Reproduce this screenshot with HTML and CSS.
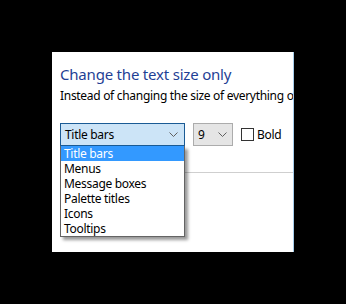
FILE: index.html
```html
<!DOCTYPE html>
<html>
<head>
<meta charset="utf-8">
<link rel="stylesheet" href="styles.css">
</head>
<body>
<div class="panel">
  <h1 class="title">Change the text size only</h1>
  <p class="desc">Instead of changing the size of everything on this screen, change only the text size.</p>
  <div class="row">
    <div class="combo-wrap">
      <div class="combo focused">
        <span class="combo-text">Title bars</span>
        <svg class="chev" width="9" height="5" viewBox="0 0 9 5"><path d="M0.5 0.5 L4.5 4.5 L8.5 0.5" fill="none" stroke="#606060" stroke-width="1"/></svg>
      </div>
      <ul class="list">
        <li class="sel">Title bars</li>
        <li>Menus</li>
        <li>Message boxes</li>
        <li>Palette titles</li>
        <li>Icons</li>
        <li>Tooltips</li>
      </ul>
    </div>
    <div class="combo size">
      <span class="combo-text">9</span>
      <svg class="chev" width="9" height="5" viewBox="0 0 9 5"><path d="M0.5 0.5 L4.5 4.5 L8.5 0.5" fill="none" stroke="#606060" stroke-width="1"/></svg>
    </div>
    <label class="check"><span class="box"></span><span>Bold</span></label>
  </div>
  <div class="sep"></div>
</div>
</body>
</html>
```
FILE: styles.css
```css
html, body {
  margin: 0;
  padding: 0;
  background: #000;
}
body {
  width: 346px;
  height: 304px;
  overflow: hidden;
  font-family: "Noto Sans", "Open Sans", sans-serif;
}
.panel {
  box-sizing: border-box;
  width: 242px;
  height: 200px;
  margin: 52px 0 0 52px;
  background: #fff;
  border-right: 1px solid #a6cdea;
  padding: 12px 0 0 8px;
  overflow: hidden;
  position: relative;
}
.title {
  margin: 0;
  font-size: 15px;
  font-weight: normal;
  line-height: 20px;
  letter-spacing: -0.2px;
  color: #1f3f95;
  white-space: nowrap;
}
.desc {
  margin: 2px 0 0;
  font-size: 12px;
  line-height: 20px;
  letter-spacing: -0.3px;
  color: #000;
  white-space: nowrap;
}
.row {
  display: flex;
  align-items: center;
  margin-top: 17px;
  height: 23px;
  letter-spacing: -0.3px;
}
.combo-wrap {
  position: relative;
}
.combo {
  box-sizing: border-box;
  height: 23px;
  display: flex;
  align-items: center;
  justify-content: space-between;
  font-size: 12px;
  padding: 0 6px 0 4px;
  border: 1px solid #acacac;
  background: #e5e5e5;
}
.combo.focused {
  width: 125px;
  border-color: #1a5b95;
  background: #cce4f7;
}
.combo.size {
  width: 40px;
  margin-left: 8px;
  padding-right: 5px;
}
.chev {
  display: block;
}
.list {
  position: absolute;
  left: 0;
  top: 23px;
  margin: 0;
  padding: 0;
  list-style: none;
  width: 125px;
  box-sizing: border-box;
  border: 1px solid #646464;
  border-top: none;
  background: #fff;
  box-shadow: 3px 3px 3px rgba(0,0,0,0.4);
  z-index: 2;
}
.list li {
  font-size: 12px;
  height: 15px;
  line-height: 15px;
  padding-left: 3px;
  color: #000;
}
.list li.sel {
  background: #3399ff;
  color: #fff;
}
.check {
  display: flex;
  align-items: center;
  margin-left: 8px;
  font-size: 12px;
}
.box {
  box-sizing: border-box;
  width: 13px;
  height: 13px;
  border: 1px solid #333;
  background: #fff;
  margin-right: 3px;
}
.sep {
  margin-top: 26px;
  height: 1px;
  background: #cfcfcf;
}
```
